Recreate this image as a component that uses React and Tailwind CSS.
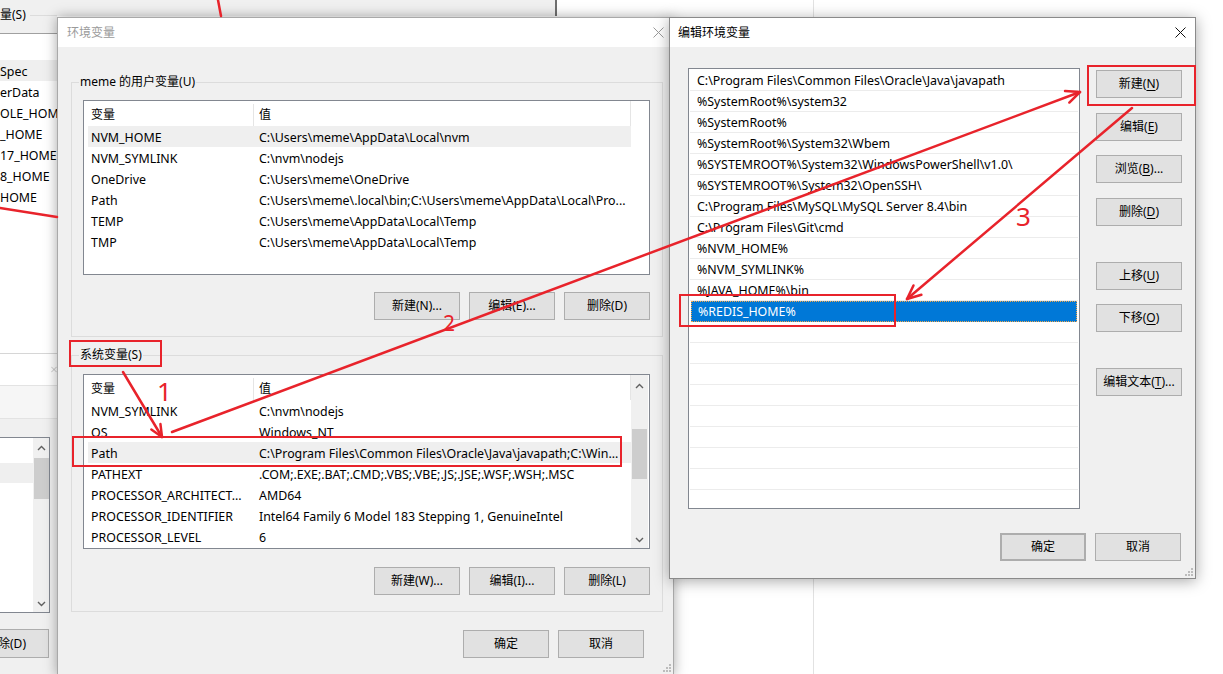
import React from 'react';

const RED = '#e8232b';

const userVars = [
  ['NVM_HOME', 'C:\\Users\\meme\\AppData\\Local\\nvm'],
  ['NVM_SYMLINK', 'C:\\nvm\\nodejs'],
  ['OneDrive', 'C:\\Users\\meme\\OneDrive'],
  ['Path', 'C:\\Users\\meme\\.local\\bin;C:\\Users\\meme\\AppData\\Local\\Pro...'],
  ['TEMP', 'C:\\Users\\meme\\AppData\\Local\\Temp'],
  ['TMP', 'C:\\Users\\meme\\AppData\\Local\\Temp'],
];

const sysVars = [
  ['NVM_SYMLINK', 'C:\\nvm\\nodejs'],
  ['OS', 'Windows_NT'],
  ['Path', 'C:\\Program Files\\Common Files\\Oracle\\Java\\javapath;C:\\Win...'],
  ['PATHEXT', '.COM;.EXE;.BAT;.CMD;.VBS;.VBE;.JS;.JSE;.WSF;.WSH;.MSC'],
  ['PROCESSOR_ARCHITECT...', 'AMD64'],
  ['PROCESSOR_IDENTIFIER', 'Intel64 Family 6 Model 183 Stepping 1, GenuineIntel'],
  ['PROCESSOR_LEVEL', '6'],
];

const paths = [
  'C:\\Program Files\\Common Files\\Oracle\\Java\\javapath',
  '%SystemRoot%\\system32',
  '%SystemRoot%',
  '%SystemRoot%\\System32\\Wbem',
  '%SYSTEMROOT%\\System32\\WindowsPowerShell\\v1.0\\',
  '%SYSTEMROOT%\\System32\\OpenSSH\\',
  'C:\\Program Files\\MySQL\\MySQL Server 8.4\\bin',
  'C:\\Program Files\\Git\\cmd',
  '%NVM_HOME%',
  '%NVM_SYMLINK%',
  '%JAVA_HOME%\\bin',
  '%REDIS_HOME%',
  '', '', '', '', '', '', '', '', '',
];

const bgRows = ['Spec', 'erData', 'OLE_HOME', '_HOME', '17_HOME', '8_HOME', 'HOME'];

function CloseX({ color }) {
  return (
    <svg width="11" height="11" viewBox="0 0 11 11">
      <path d="M0.5 0.5 L10.5 10.5 M10.5 0.5 L0.5 10.5" stroke={color} strokeWidth="1" fill="none" />
    </svg>
  );
}

function Chevron({ up }) {
  return (
    <svg width="9" height="6" viewBox="0 0 9 6">
      <path d={up ? 'M1 5 L4.5 1.5 L8 5' : 'M1 1 L4.5 4.5 L8 1'} fill="none" stroke="#606060" strokeWidth="1.4" />
    </svg>
  );
}

function Grip() {
  const dots = [[6, 0], [6, 3], [3, 3], [6, 6], [3, 6], [0, 6]];
  return (
    <svg width="8" height="8" viewBox="0 0 8 8">
      {dots.map(([x, y], i) => (
        <rect key={i} x={x} y={y} width="2" height="2" fill="#bcbcbc" />
      ))}
    </svg>
  );
}

function Btn({ children, className = '' }) {
  return (
    <div className={`flex items-center justify-center w-[86px] h-[28px] bg-[#e1e1e1] border border-[#adadad] text-[12px] leading-none text-black whitespace-nowrap ${className}`}>
      {children}
    </div>
  );
}

const U = ({ children }) => <span className="underline underline-offset-[2px]">{children}</span>;

function Scrollbar() {
  return (
    <div className="flex flex-col items-center w-[17px] h-full bg-[#f0f0f0]">
      <div className="flex items-center justify-center h-[22px]">
        <Chevron up />
      </div>
      <div className="mt-[32px] w-[15px] h-[50px] bg-[#cdcdcd]" />
      <div className="flex-1" />
      <div className="flex items-center justify-center h-[17px]">
        <Chevron />
      </div>
    </div>
  );
}

function VarList({ rows, hl, scroll }) {
  return (
    <div className="flex w-[567px] h-[175px] bg-white border border-[#828790] overflow-hidden text-[12.4px]">
      <div className="flex flex-col w-[547px]">
        <div className="flex items-center h-[25px] pt-[3px] border-r border-[#e5e5e5] text-[12px]">
          <div className="flex items-center w-[170px] h-full pl-[7px] border-r border-[#e5e5e5]">变量</div>
          <div className="pl-[5px]">值</div>
        </div>
        {rows.map(([k, v], i) => (
          <div key={k} className={`flex items-center h-[21px] pt-[3px] ml-[4px] ${i === hl ? 'bg-[#efefef]' : ''}`}>
            <div className="w-[167px] pl-[3px] whitespace-nowrap overflow-hidden">{k}</div>
            <div className="pl-[4px] whitespace-nowrap">{v}</div>
          </div>
        ))}
      </div>
      {scroll && <Scrollbar />}
    </div>
  );
}

function Group({ label, className = '', children }) {
  return (
    <div className={`relative ml-[13px] w-[592px] pl-[11px] pr-[12px] pb-[16px] border border-[#dcdcdc] ${className}`}>
      <span className="absolute left-[7px] top-[-9px] px-[1px] leading-[16px] bg-[#f0f0f0] whitespace-nowrap">{label}</span>
      {children}
    </div>
  );
}

function Arrow({ x1, y1, x2, y2, len = 15 }) {
  const a = Math.atan2(y2 - y1, x2 - x1);
  const w = 0.42;
  const p1 = [x2 - len * Math.cos(a - w), y2 - len * Math.sin(a - w)];
  const p2 = [x2 - len * Math.cos(a + w), y2 - len * Math.sin(a + w)];
  return (
    <g>
      <line x1={x1} y1={y1} x2={x2} y2={y2} />
      <polyline points={`${p1.join(',')} ${x2},${y2} ${p2.join(',')}`} fill="none" />
    </g>
  );
}

export default function App() {
  return (
    <div className="relative w-[1223px] h-[674px] overflow-hidden bg-white text-[12px] text-black font-['Noto_Sans','Noto_Sans_CJK_SC',sans-serif]">
      {/* desktop behind */}
      <div className="absolute left-0 top-0 w-[557px] h-[16px] bg-[#f0f0f0] border-r-2 border-[#6f6f6f]" />
      <div className="absolute left-[813px] top-0 w-px h-[674px] bg-[#e2e2e2]" />

      {/* older window at left edge */}
      <div className="absolute left-0 top-0 w-[57px] h-[674px] bg-[#f0f0f0] flex flex-col overflow-hidden">
        <div className="h-[8px] shrink-0" />
        <div className="flex items-center h-[14px] leading-none shrink-0">
          <span className="whitespace-nowrap">量(S)</span>
          <div className="flex-1 ml-[4px] border-t border-[#dcdcdc]" />
        </div>
        <div className="h-[11px] shrink-0" />
        <div className="flex flex-col h-[320px] shrink-0 bg-white border-t border-[#a0a0a0] text-[12.4px]">
          <div className="h-[26px] shrink-0" />
          {bgRows.map((r, i) => (
            <div key={r} className={`flex items-center h-[21px] pt-[3px] whitespace-nowrap ${i === 0 ? 'bg-[#efefef]' : ''}`}>
              {r}
            </div>
          ))}
        </div>
        <div className="flex items-center h-[32px] shrink-0 pl-[51px] bg-white border-t border-[#d6d6d6]">
          <CloseX color="#9a9a9a" />
        </div>
        <div className="h-[34px] shrink-0 bg-[#f6f6f6] border-y border-[#e3e3e3]" />
        <div className="h-[18px] shrink-0" />
        <div className="flex h-[176px] shrink-0 w-[50px] bg-white border border-[#828790] border-l-0">
          <div className="flex-1 flex flex-col pt-[25px]">
            <div className="h-[20px] bg-[#efefef]" />
          </div>
          <div className="flex flex-col items-center w-[16px] bg-[#f0f0f0]">
            <div className="flex items-center justify-center h-[20px]">
              <Chevron up />
            </div>
            <div className="w-[15px] h-[41px] bg-[#cdcdcd]" />
            <div className="flex-1" />
            <div className="flex items-center justify-center h-[17px]">
              <Chevron />
            </div>
          </div>
        </div>
        <div className="h-[16px] shrink-0" />
        <div className="flex items-center justify-center w-[86px] h-[29px] ml-[-37px] shrink-0 bg-[#e1e1e1] border border-[#adadad] whitespace-nowrap">
          删除(D)
        </div>
      </div>

      {/* 环境变量 */}
      <div className="absolute left-[57px] top-[17px] w-[617px] h-[659px] flex flex-col bg-[#f0f0f0] border border-[#a9a9a9] shadow-[0_0_12px_rgba(0,0,0,0.35)]">
        <div className="flex items-center justify-between h-[29px] pl-[9px] pr-[9px] bg-white">
          <span className="text-[#9a9a9a]">环境变量</span>
          <CloseX color="#9a9a9a" />
        </div>

        <Group label="meme 的用户变量(U)" className="mt-[35px] pt-[17px]">
          <VarList rows={userVars} hl={0} />
          <div className="flex justify-end gap-[9px] mt-[17px]">
            <Btn className="h-[27px]">新建(N)...</Btn>
            <Btn className="h-[27px]">编辑(E)...</Btn>
            <Btn className="h-[27px]">删除(D)</Btn>
          </div>
        </Group>

        <Group label="系统变量(S)" className="mt-[18px] pt-[18px]">
          <VarList rows={sysVars} hl={2} scroll />
          <div className="flex justify-end gap-[9px] mt-[18px]">
            <Btn className="h-[27px]">新建(W)...</Btn>
            <Btn className="h-[27px]">编辑(I)...</Btn>
            <Btn className="h-[27px]">删除(L)</Btn>
          </div>
        </Group>

        <div className="flex justify-end gap-[9px] mt-[18px] mr-[29px]">
          <Btn className="h-[27px]">确定</Btn>
          <Btn className="h-[27px]">取消</Btn>
        </div>
        <div className="absolute right-[2px] bottom-[3px]">
          <Grip />
        </div>
      </div>

      {/* 编辑环境变量 */}
      <div className="absolute left-[669px] top-[17px] w-[527px] h-[562px] flex flex-col bg-[#f0f0f0] border border-[#8a8a8a] shadow-[0_2px_14px_rgba(0,0,0,0.35)]">
        <div className="flex items-center justify-between h-[29px] pl-[8px] pr-[9px] bg-white">
          <span>编辑环境变量</span>
          <CloseX color="#111111" />
        </div>
        <div className="flex gap-[16px] pt-[21px] pl-[18px]">
          <div className="flex flex-col w-[392px] h-[441px] pt-px bg-white border border-[#828790] overflow-hidden text-[12.4px]">
            {paths.map((p, i) =>
              i === 11 ? (
                <div key={i} className="flex items-center h-[21px] shrink-0 mx-[2px] pl-[6px] pt-[2px] bg-[#0078d7] text-white border border-dotted border-[#f2a84c] whitespace-nowrap">
                  {p}
                </div>
              ) : (
                <div key={i} className="flex items-center h-[21px] shrink-0 mx-px pl-[7px] pt-[3px] border-b border-[#ececec] whitespace-nowrap">
                  {p}
                </div>
              )
            )}
          </div>
          <div className="flex flex-col pt-[2px]">
            <Btn>新建(<U>N</U>)</Btn>
            <Btn className="mt-[15px]">编辑(<U>E</U>)</Btn>
            <Btn className="mt-[14px]">浏览(<U>B</U>)...</Btn>
            <Btn className="mt-[15px]">删除(<U>D</U>)</Btn>
            <Btn className="mt-[36px]">上移(<U>U</U>)</Btn>
            <Btn className="mt-[14px]">下移(<U>O</U>)</Btn>
            <Btn className="mt-[36px]">编辑文本(<U>T</U>)...</Btn>
          </div>
        </div>
        <div className="flex justify-end gap-[9px] mt-[24px] pr-[14px]">
          <Btn className="border-2 border-[#0078d7]">确定</Btn>
          <Btn>取消</Btn>
        </div>
        <div className="absolute right-[2px] bottom-[2px]">
          <Grip />
        </div>
      </div>

      {/* red annotations */}
      <svg className="absolute left-0 top-0 pointer-events-none" width="1223" height="674" viewBox="0 0 1223 674" stroke={RED} strokeWidth="2.5" strokeLinecap="round" strokeLinejoin="round" fill="none">
        <line x1="218" y1="0" x2="221" y2="16" />
        <line x1="0" y1="208" x2="57" y2="217" />
        <rect x="70" y="341" width="91" height="25" strokeWidth="2" strokeLinecap="butt" strokeLinejoin="miter" />
        <rect x="73" y="437" width="548" height="29" strokeWidth="2" strokeLinecap="butt" strokeLinejoin="miter" />
        <rect x="1088" y="66" width="107" height="39" strokeWidth="2" strokeLinecap="butt" strokeLinejoin="miter" />
        <rect x="680" y="295" width="215" height="31" strokeWidth="2" strokeLinecap="butt" strokeLinejoin="miter" />
        <Arrow x1={123} y1={372} x2={162} y2={437} len={13} />
        <Arrow x1={172} y1={432} x2={1080} y2={92} />
        <Arrow x1={1132} y1={108} x2={907} y2={299} />
      </svg>
      <span className="absolute left-[157px] top-[378px] text-[26px] leading-none text-[#e8232b]">1</span>
      <span className="absolute left-[443px] top-[313px] text-[21px] leading-none text-[#e8232b]">2</span>
      <span className="absolute left-[1016px] top-[203px] text-[26px] leading-none text-[#e8232b]">3</span>
    </div>
  );
}
